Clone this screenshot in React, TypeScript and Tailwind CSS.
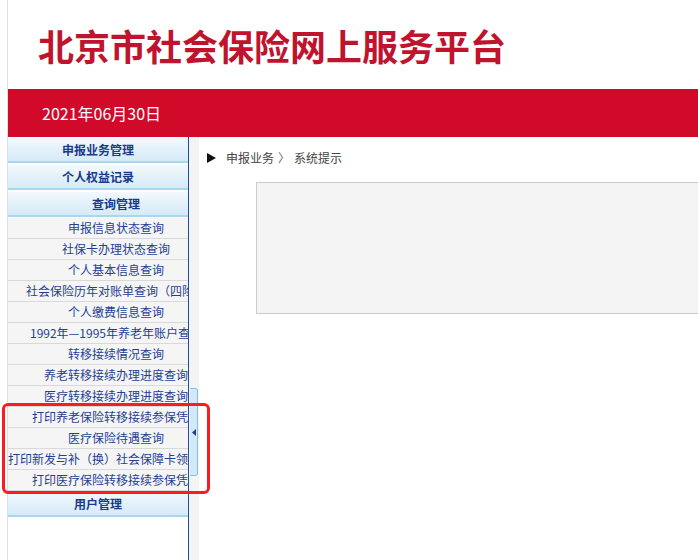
import React from 'react';

const groups = ['申报业务管理', '个人权益记录'];

const queryItems = [
    '申报信息状态查询',
    '社保卡办理状态查询',
    '个人基本信息查询',
    '社会保险历年对账单查询（四险）',
    '个人缴费信息查询',
    '1992年—1995年养老年账户查询',
    '转移接续情况查询',
    '养老转移接续办理进度查询',
    '医疗转移接续办理进度查询',
    '打印养老保险转移接续参保凭证',
    '医疗保险待遇查询',
    '打印新发与补（换）社会保障卡领取凭证',
    '打印医疗保险转移接续参保凭证',
];

function GroupHeader({ title, wide }: { title: string; wide?: boolean }) {
    return (
        <div className="h-[27px] border-b border-white">
            <div className="h-[24px] bg-gradient-to-b from-[#f3f9fd] via-[#e3f1fa] to-[#d6ebf8] border-t border-[#ffffff] flex items-center">
                <div className={`${wide ? 'w-[216px]' : 'w-[180px]'} shrink-0 text-center text-[12px] font-bold text-[#173a8a] leading-none`}>
                    {title}
                </div>
            </div>
            <div className="h-[2px] bg-[#a8d6ef]" />
        </div>
    );
}

export default function App() {
    return (
        <div className="min-h-[560px] bg-white font-['Noto_Sans_CJK_SC','Noto_Sans',sans-serif]">
            <div className="ml-[7px] border-l border-[#dedede] min-h-[560px] relative">
                {/* Title */}
                <div className="h-[89px] flex items-center pl-[30px]">
                    <h1 className="text-[36px] font-bold text-[#c0142e] leading-none tracking-[0px]">
                        北京市社会保险网上服务平台
                    </h1>
                </div>
                <div className="h-[48px] bg-[#d10a2a] flex items-center pl-[34px] text-white text-[16px]">
                    2021年06月30日
                </div>

                <div className="flex min-h-[423px]">
                    {/* Sidebar */}
                    <div className="w-[181px] shrink-0 border-r border-[#1d4ea3] overflow-hidden">
                        {groups.map((g) => (
                            <GroupHeader key={g} title={g} />
                        ))}
                        <GroupHeader title="查询管理" wide />
                        {queryItems.map((item) => (
                            <div
                                key={item}
                                className="h-[21px] bg-[#f5f5f5] border-b border-[#d9d9d9] flex items-center"
                            >
                                <div className="w-[216px] shrink-0 flex justify-center">
                                    <span className="whitespace-nowrap text-[12px] text-[#1f3f94] leading-none">
                                        {item}
                                    </span>
                                </div>
                            </div>
                        ))}
                        <GroupHeader title="用户管理" />
                    </div>

                    <div className="w-[10px] shrink-0 bg-[#f4f4f4]" />

                    {/* Main */}
                    <div className="flex-1 pl-[8px] pt-[14px] overflow-hidden">
                        <div className="flex items-center h-[14px] text-[12px] text-[#444]">
                            <svg width="9" height="10" viewBox="0 0 9 10" className="mr-[10px]">
                                <polygon points="0,0 9,5 0,10" fill="#111" />
                            </svg>
                            <span>申报业务</span>
                            <span className="mx-[4px] text-[#666]">〉</span>
                            <span>系统提示</span>
                        </div>
                        <div className="ml-[49px] mt-[17px] h-[132px] w-[520px] bg-[#f4f4f4] border border-[#cccccc]" />
                    </div>
                </div>

                {/* Collapse tab */}
                <div className="absolute left-[182px] top-[388px] w-[8px] h-[88px] rounded-r-[3px] bg-[#d3e8f8] border border-l-0 border-[#8dbfe6] flex items-center justify-center">
                    <svg width="4" height="7" viewBox="0 0 4 7">
                        <polygon points="4,0 0,3.5 4,7" fill="#1d3f8c" />
                    </svg>
                </div>

                {/* Red highlight annotation */}
                <div className="absolute -left-[6px] top-[403px] w-[208px] h-[91px] border-[3px] border-[#fb1d1d] rounded-[6px]" />
            </div>
        </div>
    );
}
